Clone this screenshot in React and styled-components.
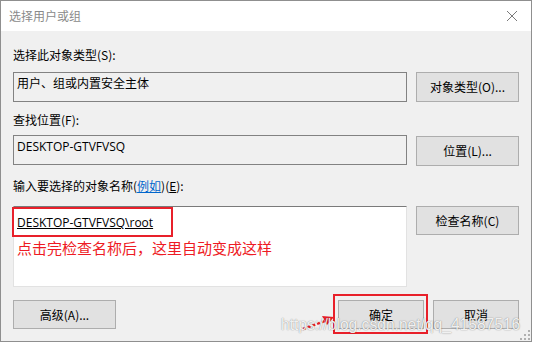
import React from "react";
import styled, { createGlobalStyle } from "styled-components";

const GlobalStyle = createGlobalStyle`
  html, body {
    margin: 0;
    padding: 0;
    background: #ffffff;
  }
  body {
    font-family: "Noto Sans CJK SC", "Liberation Sans", sans-serif;
    font-size: 12px;
    color: #000;
  }
`;

// window frame
const Window = styled.div`
  position: relative;
  width: 532px;
  height: 342px;
  box-sizing: border-box;
  border: 1px solid #8f8f8f;
  background: #f0f0f0;
  display: flex;
  flex-direction: column;
  overflow: hidden;
`;

const TitleBar = styled.div`
  height: 30px;
  background: #ffffff;
  display: flex;
  align-items: center;
  justify-content: space-between;
  padding: 0 11px 0 8px;
  flex-shrink: 0;
`;

const Title = styled.span`
  font-size: 12px;
  color: #8a8a8a;
  line-height: 16px;
`;

const CloseIcon = styled.svg`
  width: 12px;
  height: 12px;
  margin-right: 2px;
`;

const Body = styled.div`
  padding: 16px 12px 0 12px;
  display: flex;
  flex-direction: column;
`;

const Label = styled.div`
  line-height: 16px;
  height: 16px;
  margin-top: ${(p) => p.$top || 0}px;
  margin-bottom: ${(p) => p.$bottom || 0}px;
  white-space: nowrap;
`;

const Link = styled.span`
  color: #0066cc;
  text-decoration: underline;
`;

const Ul = styled.span`
  text-decoration: underline;
`;

const Row = styled.div`
  display: grid;
  grid-template-columns: 394px 103px;
  column-gap: 9px;
  align-items: start;
`;

const ReadBox = styled.div`
  box-sizing: border-box;
  height: 30px;
  border: 1px solid #828282;
  background: #f0f0f0;
  padding: ${(p) => p.$pad || 2}px 3px 0 3px;
  line-height: 16px;
  font-family: ${(p) => (p.$latin ? `"Open Sans", "Noto Sans CJK SC", sans-serif` : "inherit")};
`;

const InputBox = styled.div`
  position: relative;
  box-sizing: border-box;
  height: 81px;
  background: #ffffff;
  border: 1px solid #e2e2e2;
  border-top: 1px solid #7a7a7a;
  padding: 8px 3px 0 3px;
`;

const NameLine = styled.div`
  font-family: "Open Sans", "Noto Sans CJK SC", sans-serif;
  line-height: 16px;
  text-decoration: underline;
  white-space: nowrap;
`;

const Note = styled.div`
  margin-top: 7px;
  color: #ee1b24;
  font-size: 15px;
  line-height: 20px;
  white-space: nowrap;
`;

const Mark = styled.div`
  position: absolute;
  left: ${(p) => p.$x}px;
  top: ${(p) => p.$y}px;
  width: ${(p) => p.$w}px;
  height: ${(p) => p.$h}px;
  box-sizing: border-box;
  border: 2px solid #e8202a;
  pointer-events: none;
`;

const Button = styled.button`
  box-sizing: border-box;
  width: ${(p) => p.$w || 103}px;
  height: ${(p) => p.$h || 29}px;
  margin-top: ${(p) => p.$top || 0}px;
  border: 1px solid #adadad;
  background: #e1e1e1;
  font-family: "Noto Sans CJK SC", "Liberation Sans", sans-serif;
  font-size: 12px;
  color: #000;
  padding: 0;
  line-height: 16px;
`;

const Footer = styled.div`
  margin-top: 13px;
  display: flex;
  align-items: center;
`;

const FooterRight = styled.div`
  margin-left: auto;
  display: flex;
  gap: 9px;
  position: relative;
`;

const Watermark = styled.div`
  position: absolute;
  left: 280px;
  top: 313px;
  font-family: "Liberation Sans", sans-serif;
  font-size: 15.6px;
  line-height: 22px;
  color: rgba(255, 255, 255, 0.9);
  text-shadow: 0 0 1px rgba(0, 0, 0, 0.4), 0 0 2px rgba(0, 0, 0, 0.15);
  white-space: nowrap;
  pointer-events: none;
`;

const Arrow = styled.svg`
  position: absolute;
  left: 300px;
  top: 311px;
  width: 36px;
  height: 20px;
`;

const Grip = styled.svg`
  position: absolute;
  right: 1px;
  bottom: 1px;
  width: 10px;
  height: 10px;
`;

export default function App() {
  return (
    <>
      <GlobalStyle />
      <Window>
        <TitleBar>
          <Title>选择用户或组</Title>
          <CloseIcon viewBox="0 0 12 12">
            <path d="M1 1 L11 11 M11 1 L1 11" stroke="#7a7a7a" strokeWidth="1" />
          </CloseIcon>
        </TitleBar>
        <Body>
          <Label $bottom={9}>选择此对象类型(S):</Label>
          <Row>
            <ReadBox>用户、组或内置安全主体</ReadBox>
            <Button $h={30}>对象类型(O)...</Button>
          </Row>
          <Label $top={10} $bottom={7}>查找位置(F):</Label>
          <Row>
            <ReadBox $latin $pad={3}>DESKTOP-GTVFVSQ</ReadBox>
            <Button $h={30} $top={1}>位置(L)...</Button>
          </Row>
          <Label $top={12} $bottom={12}>
            输入要选择的对象名称(<Link>例如</Link>)(<Ul>E</Ul>):
          </Label>
          <Row>
            <InputBox>
              <NameLine>DESKTOP-GTVFVSQ\root</NameLine>
              <Note>点击完检查名称后，这里自动变成这样</Note>
              <Mark $x={-2} $y={0} $w={161} $h={30} />
            </InputBox>
            <Button>检查名称(C)</Button>
          </Row>
          <Footer>
            <Button>高级(A)...</Button>
            <FooterRight>
              <Button $w={86}>确定</Button>
              <Button $w={86}>取消</Button>
              <Mark $x={-5} $y={-6} $w={95} $h={40} />
            </FooterRight>
          </Footer>
        </Body>
        <Arrow viewBox="0 0 36 20">
          <path
            d="M2 17 L24 9"
            stroke="#e8202a"
            strokeWidth="2.5"
            strokeDasharray="3 2"
          />
          <path d="M21 4 L33 5 L26 13 Z" fill="#e8202a" />
        </Arrow>
        <Watermark>https://blog.csdn.net/qq_41587516</Watermark>
        <Grip viewBox="0 0 10 10">
          <rect x="8" y="0" width="2" height="2" fill="#b0b0b0" />
          <rect x="4" y="4" width="2" height="2" fill="#b0b0b0" />
          <rect x="8" y="4" width="2" height="2" fill="#b0b0b0" />
          <rect x="0" y="8" width="2" height="2" fill="#b0b0b0" />
          <rect x="4" y="8" width="2" height="2" fill="#b0b0b0" />
          <rect x="8" y="8" width="2" height="2" fill="#b0b0b0" />
        </Grip>
      </Window>
    </>
  );
}
